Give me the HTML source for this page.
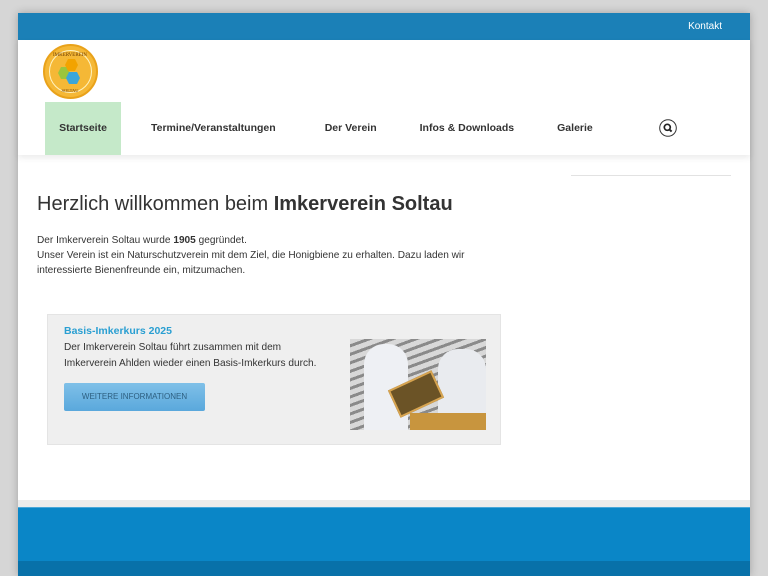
<!DOCTYPE html>
<html><head><meta charset="utf-8"><style>
*{margin:0;padding:0;box-sizing:border-box}
body{width:768px;height:576px;overflow:hidden;background:#d6d6d6;font-family:"Liberation Sans",sans-serif;position:relative}
.wrap{position:absolute;left:18px;top:13px;width:732px;height:563px;background:#fff;box-shadow:0 0 8px rgba(0,0,0,.25)}
.top{height:27px;background:#1b80b7;color:#fff;font-size:10px;text-align:right;padding:8px 28px 0 0}
.hdr{position:relative;height:115px;background:#fff;box-shadow:0 3px 6px rgba(0,0,0,.08)}
.logo{position:absolute;left:25px;top:4px;width:55px;height:55px;border-radius:50%;background:#f5b836;border:2px solid #e9a21a}
.nav{position:absolute;top:62px;left:27px;height:53px;display:flex;font-weight:bold;font-size:10.5px;color:#333}
.nav div{height:53px;line-height:53px}
p{font-size:10.1px;color:#333}
</style></head><body>
<div class="wrap">
<div class="top">Kontakt</div>
<div class="hdr">
<div class="logo"><svg width="51" height="51" viewBox="0 0 51 51"><circle cx="25.5" cy="25.5" r="21" fill="none" stroke="#fff3c0" stroke-width="1"/><polygon points="16,21 22,21 25,27 22,33 16,33 13,27" fill="#9bc53d"/><polygon points="23,13 30,13 33,19 30,25 23,25 20,19" fill="#f2a300"/><polygon points="24,26 32,26 35,32 32,38 24,38 21,32" fill="#3ba6d9"/><text x="25" y="10" font-size="5" text-anchor="middle" fill="#6b3a00" font-family="Liberation Serif">IMKERVEREIN</text><text x="25" y="46" font-size="4.5" text-anchor="middle" fill="#6b3a00" font-family="Liberation Serif">SOLTAU</text></svg></div>
<div class="nav">
<div style="width:76px;background:#c5e9c9;text-align:center">Startseite</div>
<div style="margin-left:30px">Termine/Veranstaltungen</div>
<div style="margin-left:49px">Der Verein</div>
<div style="margin-left:43px">Infos &amp; Downloads</div>
<div style="margin-left:43px">Galerie</div>
<div style="margin-left:66px;padding-top:17px;line-height:0"><svg width="18" height="18" viewBox="0 0 18 18"><circle cx="9" cy="9" r="8.3" fill="none" stroke="#333" stroke-width="1"/><circle cx="8.3" cy="8.3" r="3" fill="none" stroke="#222" stroke-width="1.7"/><line x1="10.4" y1="10.4" x2="12.6" y2="12.6" stroke="#222" stroke-width="2"/></svg></div>
</div>
</div>
<div style="position:absolute;left:553px;top:162px;width:160px;height:1px;background:#e2e2e2"></div>
<div style="position:absolute;left:19px;top:180px;font-size:20px;color:#333">Herzlich willkommen beim <b>Imkerverein Soltau</b></div>
<div style="position:absolute;left:19px;top:220px;line-height:15px;width:440px"><p>Der Imkerverein Soltau wurde <b>1905</b> gegründet.<br>Unser Verein ist ein Naturschutzverein mit dem Ziel, die Honigbiene zu erhalten. Dazu laden wir interessierte Bienenfreunde ein, mitzumachen.</p></div>
<div style="position:absolute;left:29px;top:301px;width:454px;height:131px;background:#efefef;border:1px solid #e4e4e4">
<div style="position:absolute;left:16px;top:10px;font-size:10.5px;font-weight:bold;color:#2a9fd2">Basis-Imkerkurs 2025</div>
<div style="position:absolute;left:16px;top:25px;line-height:15.5px;width:265px"><p>Der Imkerverein Soltau führt zusammen mit dem Imkerverein Ahlden wieder einen Basis-Imkerkurs durch.</p></div>
<div style="position:absolute;left:16px;top:68px;width:141px;height:28px;background:linear-gradient(#7fc0e8,#5aa8dc);color:#2d5f80;font-size:8px;text-align:center;line-height:28px;border-radius:2px">WEITERE INFORMATIONEN</div>
<div style="position:absolute;left:302px;top:24px;width:136px;height:91px;background:repeating-linear-gradient(160deg,#d8d8d8 0 5px,#8a8a8a 5px 8px);overflow:hidden">
<div style="position:absolute;left:14px;top:5px;width:44px;height:86px;background:#eef0f4;border-radius:20px 20px 0 0"></div>
<div style="position:absolute;left:88px;top:10px;width:48px;height:81px;background:#e9ebef;border-radius:20px 20px 0 0"></div>
<div style="position:absolute;left:42px;top:40px;width:48px;height:30px;background:#6b5326;transform:rotate(-25deg);border:2px solid #d7a450"></div>
<div style="position:absolute;left:60px;top:74px;width:76px;height:17px;background:#c8953e"></div>
</div>
</div>
<div style="position:absolute;left:0;top:487px;width:732px;height:7px;background:#ececec"></div>
<div style="position:absolute;left:0;top:494px;width:732px;height:54px;background:#0a86c7;border-top:1px solid #4aa7d8"></div>
<div style="position:absolute;left:0;top:548px;width:732px;height:15px;background:#0871a9"></div>
</div>
</body></html>
